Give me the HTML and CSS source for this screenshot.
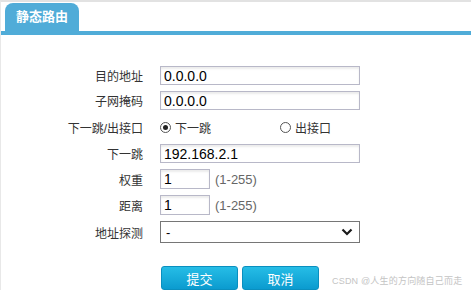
FILE: index.html
```html
<!DOCTYPE html>
<html lang="zh-CN">
<head>
  <meta charset="UTF-8">
  <meta name="viewport" content="width=device-width, initial-scale=1.0">
  <title>静态路由</title>
  <link rel="stylesheet" href="styles.css">
</head>
<body>

<div class="panel">
  <div class="tabs">
    <div class="tab">静态路由</div>
  </div>

  <form class="route-form">
    <label class="label">目的地址</label>
    <div class="field"><input type="text" class="text-input" value="0.0.0.0"></div>

    <label class="label">子网掩码</label>
    <div class="field"><input type="text" class="text-input" value="0.0.0.0"></div>

    <label class="label">下一跳/出接口</label>
    <div class="field radios">
      <label class="radio-opt first"><span class="radio checked"></span>下一跳</label>
      <label class="radio-opt"><span class="radio"></span>出接口</label>
    </div>

    <label class="label">下一跳</label>
    <div class="field"><input type="text" class="text-input" value="192.168.2.1"></div>

    <label class="label">权重</label>
    <div class="field"><input type="text" class="text-input small" value="1"><span class="hint">(1-255)</span></div>

    <label class="label">距离</label>
    <div class="field"><input type="text" class="text-input small" value="1"><span class="hint">(1-255)</span></div>

    <label class="label">地址探测</label>
    <div class="field">
      <div class="select">
        <span>-</span>
        <svg width="12" height="8" viewBox="0 0 12 8"><path d="M1.5 1.5 L6 6 L10.5 1.5" fill="none" stroke="#1a1a1a" stroke-width="2.2"/></svg>
      </div>
    </div>

    <div></div>
    <div class="buttons">
      <button type="button" class="btn">提交</button>
      <button type="button" class="btn">取消</button>
      <span class="watermark">CSDN @人生的方向随自己而走</span>
    </div>
  </form>
</div>

</body>
</html>
```

FILE: styles.css
```css
body {
  margin: 0;
  font-family: "Liberation Sans", "Noto Sans CJK SC", sans-serif;
  background: #fff;
  color: #333;
}
.panel {
  border-top: 2px solid #e2e2e2;
  border-left: 1px solid #e8e8e8;
  height: 288px;
  overflow: hidden;
}
.tabs {
  padding: 1px 0 0 4px;
  border-bottom: 4px solid #50acd8;
}
.tab {
  width: 74px;
  height: 28px;
  line-height: 28px;
  text-align: center;
  background: #50acd8;
  color: #fff;
  font-size: 13px;
  font-weight: bold;
  border-radius: 8px 8px 0 0;
}
.route-form {
  display: grid;
  grid-template-columns: 142px 1fr;
  column-gap: 17px;
  row-gap: 6px;
  padding-top: 31px;
}
.label {
  font-size: 12px;
  color: #333;
  text-align: right;
  align-self: center;
}
.field {
  display: flex;
  align-items: center;
}
.text-input {
  box-sizing: border-box;
  width: 200px;
  height: 19px;
  border: 1px solid #b8b8c8;
  padding: 0 3px;
  font-family: "Liberation Sans", sans-serif;
  font-size: 14px;
  color: #000;
  box-shadow: inset 0 2px 2px rgba(0, 0, 0, 0.08);
  outline: none;
}
.text-input.small {
  width: 50px;
  height: 20px;
}
.hint {
  margin-left: 5px;
  font-size: 13px;
  color: #666;
}
.radios {
  height: 22px;
  font-size: 12px;
  color: #333;
}
.radio-opt {
  display: flex;
  align-items: center;
}
.radio-opt.first {
  width: 120px;
}
.radio {
  box-sizing: border-box;
  width: 11px;
  height: 11px;
  border: 1px solid #555;
  border-radius: 50%;
  margin-right: 4px;
  position: relative;
}
.radio.checked::after {
  content: "";
  position: absolute;
  left: 2px;
  top: 2px;
  width: 5px;
  height: 5px;
  border-radius: 50%;
  background: #222;
}
.select {
  box-sizing: border-box;
  width: 200px;
  height: 22px;
  border: 1px solid #767676;
  display: flex;
  align-items: center;
  justify-content: space-between;
  padding: 0 6px 0 5px;
  font-size: 13px;
  color: #000;
}
.buttons {
  display: flex;
  align-items: center;
  gap: 4px;
  margin-top: 17px;
  margin-left: 1px;
}
.btn {
  width: 77px;
  height: 24px;
  border: 1px solid #0a8fbf;
  border-radius: 3px;
  background: linear-gradient(#26bde6, #0b9bcf);
  color: #fff;
  font-family: "Noto Sans CJK SC", sans-serif;
  font-size: 13px;
  padding: 0;
}
.watermark {
  margin-left: 9px;
  margin-top: 4px;
  font-size: 9px;
  letter-spacing: 0.2px;
  color: #c4c4c4;
  white-space: nowrap;
}
```
